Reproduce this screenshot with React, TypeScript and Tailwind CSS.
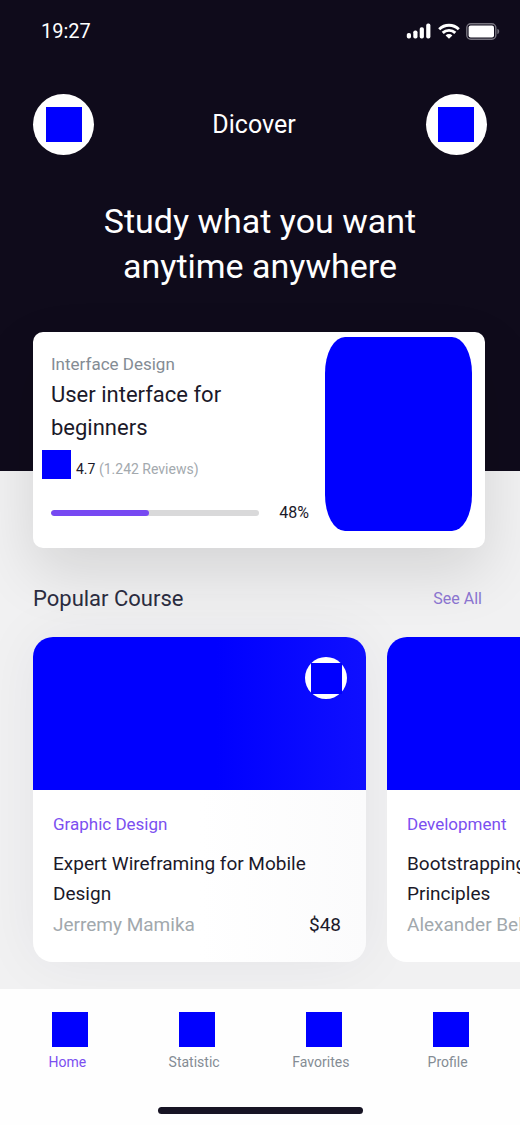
type Course = {
  category: string;
  title: string;
  author: string;
  price: string;
  tinted: boolean;
};

const courses: Course[] = [
  {
    category: "Graphic Design",
    title: "Expert Wireframing for Mobile Design",
    author: "Jerremy Mamika",
    price: "$48",
    tinted: true,
  },
  {
    category: "Development",
    title: "Bootstrapping Business Principles",
    author: "Alexander Bell",
    price: "$52",
    tinted: false,
  },
];

const tabs = ["Home", "Statistic", "Favorites", "Profile"];

function StatusBar() {
  return (
    <div className="flex h-[62px] items-center justify-between pr-5 pl-[41px]">
      <span className="text-xl">19:27</span>
      <div className="flex items-center gap-[6px]">
        <svg width="26" height="16" viewBox="0 0 26 16" fill="#fff" aria-hidden="true">
          <rect x="0.8" y="10" width="4.2" height="5.6" rx="1.8" />
          <rect x="7.3" y="7.4" width="4.2" height="8.2" rx="1.8" />
          <rect x="13.7" y="4.2" width="4.2" height="11.4" rx="1.8" />
          <rect x="20.2" y="0.6" width="4.2" height="15" rx="1.8" />
        </svg>
        <svg width="22" height="16" viewBox="0 0 22 16" fill="none" stroke="#fff" strokeWidth="2.9" aria-hidden="true">
          <path d="M1.2 6.2a14 14 0 0 1 19.6 0" />
          <path d="M4.7 9.9a9 9 0 0 1 12.6 0" />
          <path d="M11 15.8 7.6 12.5a4.8 4.8 0 0 1 6.8 0Z" fill="#fff" stroke="none" />
        </svg>
        <svg width="34" height="17" viewBox="0 0 34 17" aria-hidden="true">
          <rect x="0.8" y="0.8" width="29" height="15.4" rx="4" fill="none" stroke="#77747f" strokeWidth="1.4" />
          <rect x="2.6" y="2.6" width="25.4" height="11.8" rx="2" fill="#fff" />
          <path d="M31.4 5.8c2.4.8 2.4 4.6 0 5.4Z" fill="#77747f" />
        </svg>
      </div>
    </div>
  );
}

function RoundButton({ label }: { label: string }) {
  return (
    <button aria-label={label} className="flex size-[61px] items-center justify-center rounded-full bg-white">
      <span className="h-[35px] w-9 bg-[#0000ff]" />
    </button>
  );
}

function FeaturedCard() {
  return (
    <article className="relative mr-[35px] ml-[33px] flex h-[216px] justify-between rounded-[10px] bg-white pr-[13px] pl-[18px] shadow-[0_24px_60px_rgba(0,0,0,0.12)]">
      <div className="flex min-w-0 flex-1 flex-col pt-5 pr-4">
        <p className="text-[17px] leading-6 text-[#848c94]">Interface Design</p>
        <h2 className="mt-[2px] max-w-[200px] text-[22px] leading-[33px] text-[#1b1929]">User interface for beginners</h2>
        <div className="mt-[6px] -ml-[9px] flex items-center gap-[5px]">
          <span className="size-[29px] bg-[#0000ff]" />
          <p className="pt-2 text-sm leading-5 text-[#a3a9ae]">
            <span className="text-[#1b1929]">4.7</span> (1.242 Reviews)
          </p>
        </div>
        <div className="mt-[22px] flex items-center gap-5">
          <div
            role="progressbar"
            aria-label="Course progress"
            aria-valuenow={48}
            aria-valuemin={0}
            aria-valuemax={100}
            className="h-[6px] flex-1 overflow-hidden rounded-full bg-[#d9d9da]"
          >
            <div className="h-full rounded-full bg-[#7749f2]" style={{ width: "47%" }} />
          </div>
          <span className="text-base leading-6 text-[#1b1929]">48%</span>
        </div>
      </div>
      <div className="mt-[5px] h-[194px] w-[147px] shrink-0 rounded-[20px/36px] bg-[#0000ff]" />
    </article>
  );
}

function CourseCard({ course }: { course: Course }) {
  return (
    <article
      className={`relative w-[333px] shrink-0 overflow-hidden rounded-[20px] ${
        course.tinted
          ? "bg-linear-to-r from-white from-50% to-[#fbfbfc] shadow-[0_0_60px_rgba(30,35,60,0.06)]"
          : "bg-white"
      }`}
    >
      <div
        className={`flex h-[153px] justify-end pt-5 pr-[19px] ${
          course.tinted ? "bg-linear-to-r from-[#0000ff] from-55% to-[#0f0fff]" : "bg-[#0000ff]"
        }`}
      >
        <button aria-label={`Save ${course.title}`} className="flex size-[42px] items-center justify-center rounded-full bg-white">
          <span className="size-[31px] bg-[#0000ff]" />
        </button>
      </div>
      <div className="pt-[22px] pr-[25px] pb-[22px] pl-5">
        <p className="text-[17px] leading-6 text-[#7b4ff0]">{course.category}</p>
        <h3 className="mt-[13px] max-w-[270px] text-[19px] leading-[30px] text-[#1b1929]">{course.title}</h3>
        <div className="flex justify-between text-[19px] leading-[31px]">
          <span className="text-[#a1a8ad]">{course.author}</span>
          <span className="text-[#1b1929]">{course.price}</span>
        </div>
      </div>
    </article>
  );
}

export default function App() {
  return (
    <div className="min-h-screen overflow-x-clip bg-[#f1f1f2] font-[Roboto,sans-serif]">
      <header className="bg-[#0f0b1b] pb-[182px] text-white">
        <StatusBar />
        <div className="mx-[33px] mt-8 flex items-center justify-between">
          <RoundButton label="Menu" />
          <p className="pr-3 text-[25px] leading-8">Dicover</p>
          <RoundButton label="Search" />
        </div>
        <h1 className="mx-auto mt-11 max-w-[360px] text-center text-[34px] leading-[45px]">
          Study what you want anytime anywhere
        </h1>
      </header>

      <main className="-mt-[139px] pb-[27px]">
        <FeaturedCard />
        <section className="relative">
          <div className="mr-[38px] ml-[33px] flex items-center justify-between pt-[35px]">
            <h2 className="text-[22px] leading-8 text-[#2b2c40]">Popular Course</h2>
            <a href="#courses" className="text-base leading-6 text-[#8a74cf]">
              See All
            </a>
          </div>
          <div id="courses" className="mt-[22px] flex gap-[21px] pl-[33px]">
            {courses.map((course) => (
              <CourseCard key={course.category} course={course} />
            ))}
          </div>
        </section>
      </main>

      <nav className="relative bg-[#fefefe] pt-[23px] pb-[11px]">
        <div className="grid grid-cols-4 pr-[9px] pl-1">
          {tabs.map((tab) => (
            <a
              key={tab}
              href={`#${tab.toLowerCase()}`}
              className={`flex flex-col items-center gap-[5px] text-sm leading-5 ${
                tab === "Home" ? "text-[#7b4ff0]" : "text-[#848c94]"
              }`}
            >
              <span className="ml-[6px] h-[35px] w-9 bg-[#0000ff]" />
              {tab}
            </a>
          ))}
        </div>
        <div className="mx-auto mt-[35px] h-[7px] w-[205px] rounded-full bg-[#171424]" />
      </nav>
    </div>
  );
}
